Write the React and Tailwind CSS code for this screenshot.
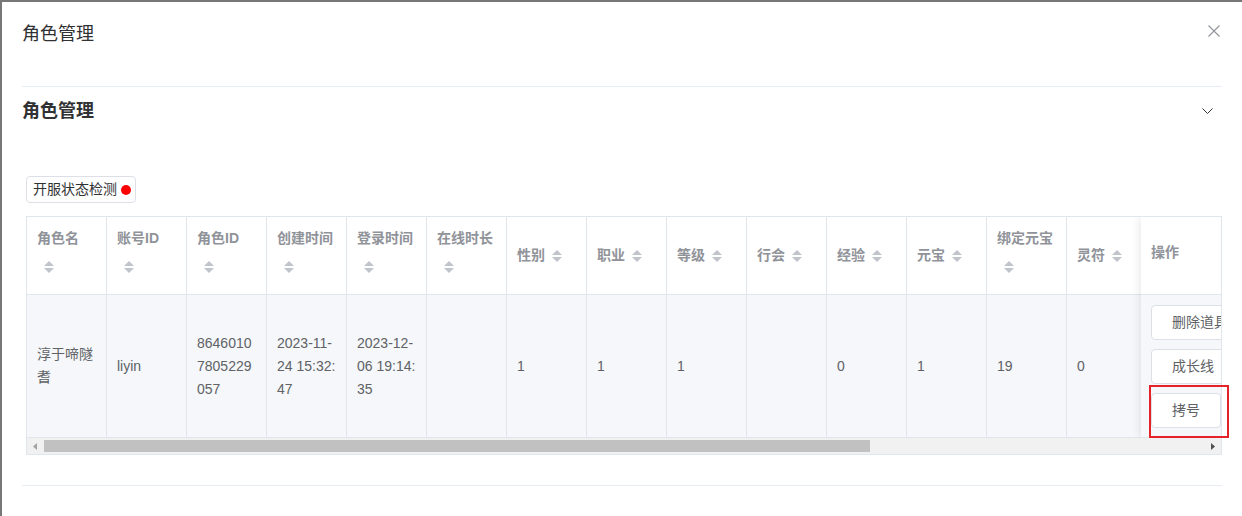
import React from "react"

const columns = [
    { title: "角色名", wrap: true, lines: ["淳于啼隧", "耆"] },
    { title: "账号ID", wrap: true, lines: ["liyin"] },
    { title: "角色ID", wrap: true, lines: ["8646010", "7805229", "057"] },
    { title: "创建时间", wrap: true, lines: ["2023-11-", "24 15:32:", "47"] },
    { title: "登录时间", wrap: true, lines: ["2023-12-", "06 19:14:", "35"] },
    { title: "在线时长", wrap: true, lines: [] },
    { title: "性别", lines: ["1"] },
    { title: "职业", lines: ["1"] },
    { title: "等级", lines: ["1"] },
    { title: "行会", lines: [] },
    { title: "经验", lines: ["0"] },
    { title: "元宝", lines: ["1"] },
    { title: "绑定元宝", wrap: true, lines: ["19"] },
    { title: "灵符", lines: ["0"] },
]

function Caret() {
    return (
        <svg width="10" height="12" viewBox="0 0 10 12">
            <path d="M0 5L5 0L10 5Z" fill="#c0c4cc" />
            <path d="M0 7L10 7L5 12Z" fill="#c0c4cc" />
        </svg>
    )
}

function HeaderCell({ col }) {
    return (
        <div className="h-[78px] border-b border-r border-[#dfe6ec] bg-white flex items-center px-[10px] text-[14px] font-bold text-[#909399]">
            {col.wrap ? (
                <div>
                    <div className="leading-[23px]">{col.title}</div>
                    <div className="h-[34px] flex items-center pl-[7px]">
                        <Caret />
                    </div>
                </div>
            ) : (
                <div className="flex items-center leading-[23px] whitespace-nowrap">
                    <span>{col.title}</span>
                    <span className="w-[24px] h-[34px] flex items-center pl-[7px]">
                        <Caret />
                    </span>
                </div>
            )}
        </div>
    )
}

function BodyCell({ col }) {
    return (
        <div className="h-[143px] border-b border-r border-[#dfe6ec] bg-[#f5f7fa] flex items-center px-[10px] text-[14px] leading-[23px] text-[#606266]">
            <div>
                {col.lines.map((l, i) => (
                    <div key={i} className="whitespace-nowrap">{l}</div>
                ))}
            </div>
        </div>
    )
}

export default function App() {
    return (
        <div className="relative w-[1242px] h-[516px] overflow-hidden bg-[#777777] pt-[2px] pl-[2px] font-['Liberation_Sans','Noto_Sans_CJK_SC',sans-serif]">
            <div className="bg-white h-[514px] w-[1240px] px-[20px]">
                <div className="h-[84px] pt-[20px] flex justify-between">
                    <span className="text-[18px] leading-[24px] text-[#303133]">角色管理</span>
                    <svg width="12" height="12" viewBox="0 0 12 12" className="mt-[3px] mr-[2px]">
                        <path d="M0.5 0.5L11.5 11.5M11.5 0.5L0.5 11.5" stroke="#909399" strokeWidth="1.1" />
                    </svg>
                </div>

                <div className="border-t border-b border-[#e6ebf5]">
                    <div className="h-[48px] flex items-center justify-between">
                        <span className="text-[18px] font-bold text-[#303133]">角色管理</span>
                        <svg width="11" height="6" viewBox="0 0 11 6" className="mr-[9px]">
                            <path d="M0.5 0.5L5.5 5.5L10.5 0.5" fill="none" stroke="#303133" strokeWidth="1" />
                        </svg>
                    </div>

                    <div className="pt-[41px] pb-[30px] pl-[4px]">
                        <button className="h-[27px] flex items-center gap-[4px] pl-[6px] pr-[4px] border border-[#dcdfe6] rounded-[4px] bg-white text-[14px] text-[#303133]">
                            开服状态检测
                            <span className="w-[10px] h-[10px] rounded-full bg-[#ff0000]" />
                        </button>

                        <div className="mt-[13px] w-[1196px] border border-[#dfe6ec]">
                            <div className="relative h-[221px] overflow-hidden">
                                <div className="flex">
                                    {columns.map((col) => (
                                        <div key={col.title} className="w-[80px] shrink-0">
                                            <HeaderCell col={col} />
                                            <BodyCell col={col} />
                                        </div>
                                    ))}
                                </div>

                                <div className="absolute right-0 top-0 w-[80px] h-[221px] shadow-[0_0_10px_rgba(0,0,0,0.12)] overflow-hidden">
                                    <div className="h-[78px] border-b border-[#dfe6ec] bg-white flex items-center px-[10px] pb-[6px] text-[14px] font-bold text-[#909399]">
                                        操作
                                    </div>
                                    <div className="h-[143px] border-b border-[#dfe6ec] bg-[#f5f7fa] flex flex-col justify-center gap-[9px] pl-[10px]">
                                        {["删除道具", "成长线", "拷号"].map((t) => (
                                            <button key={t} className="h-[35px] w-fit shrink-0 whitespace-nowrap px-[20px] border border-[#dcdfe6] rounded-[4px] bg-white text-[14px] text-[#606266]">
                                                {t}
                                            </button>
                                        ))}
                                    </div>
                                </div>
                            </div>

                            <div className="h-[16px] bg-[#f1f1f1] flex items-center">
                                <div className="w-[16px] h-[16px] flex items-center justify-center">
                                    <svg width="4" height="7" viewBox="0 0 4 7">
                                        <path d="M4 0L0 3.5L4 7Z" fill="#a3a3a3" />
                                    </svg>
                                </div>
                                <div className="ml-[1px] w-[826px] h-[12px] bg-[#c1c1c1]" />
                                <div className="flex-1" />
                                <div className="w-[16px] h-[16px] flex items-center justify-center">
                                    <svg width="4" height="7" viewBox="0 0 4 7">
                                        <path d="M0 0L4 3.5L0 7Z" fill="#505050" />
                                    </svg>
                                </div>
                            </div>
                        </div>
                    </div>
                </div>
            </div>

            <div className="absolute left-[1149px] top-[385px] w-[80px] h-[53px] border-2 border-[#e5222a]" />
        </div>
    )
}
